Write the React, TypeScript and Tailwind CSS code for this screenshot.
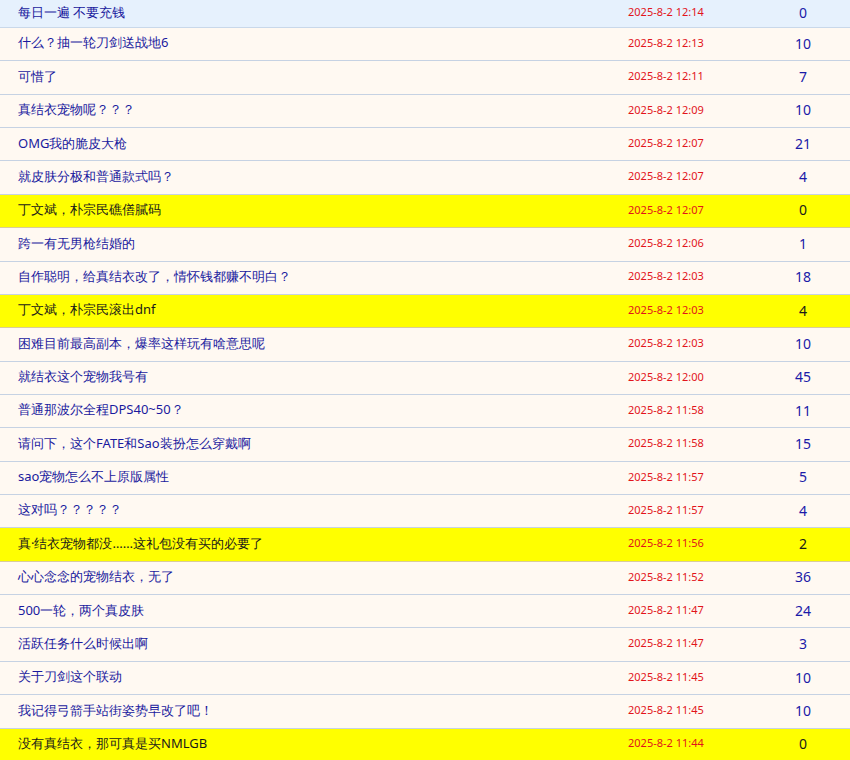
const rows: [string, string, string, number?][] = [
  ["什么？抽一轮刀剑送战地6", "2025-8-2 12:13", "10"],
  ["可惜了", "2025-8-2 12:11", "7"],
  ["真结衣宠物呢？？？", "2025-8-2 12:09", "10"],
  ["OMG我的脆皮大枪", "2025-8-2 12:07", "21"],
  ["就皮肤分极和普通款式吗？", "2025-8-2 12:07", "4"],
  ["丁文斌，朴宗民礁僐膩码", "2025-8-2 12:07", "0", 1],
  ["跨一有无男枪结婚的", "2025-8-2 12:06", "1"],
  ["自作聪明，给真结衣改了，情怀钱都赚不明白？", "2025-8-2 12:03", "18"],
  ["丁文斌，朴宗民滚出dnf", "2025-8-2 12:03", "4", 1],
  ["困难目前最高副本，爆率这样玩有啥意思呢", "2025-8-2 12:03", "10"],
  ["就结衣这个宠物我号有", "2025-8-2 12:00", "45"],
  ["普通那波尔全程DPS40~50？", "2025-8-2 11:58", "11"],
  ["请问下，这个FATE和Sao装扮怎么穿戴啊", "2025-8-2 11:58", "15"],
  ["sao宠物怎么不上原版属性", "2025-8-2 11:57", "5"],
  ["这对吗？？？？？", "2025-8-2 11:57", "4"],
  ["真·结衣宠物都没……这礼包没有买的必要了", "2025-8-2 11:56", "2", 1],
  ["心心念念的宠物结衣，无了", "2025-8-2 11:52", "36"],
  ["500一轮，两个真皮肤", "2025-8-2 11:47", "24"],
  ["活跃任务什么时候出啊", "2025-8-2 11:47", "3"],
  ["关于刀剑这个联动", "2025-8-2 11:45", "10"],
  ["我记得弓箭手站街姿势早改了吧！", "2025-8-2 11:45", "10"],
  ["没有真结衣，那可真是买NMLGB", "2025-8-2 11:44", "0", 1],
];

function Row({ t, d, c, y, first }: { t: string; d: string; c: string; y?: number; first?: boolean }) {
  const bg = first
    ? "bg-[#e6f1fd] border-[#c9d8ea] h-[28px] pb-[2px]"
    : y
    ? "bg-[#ffff00] border-[#d9cc9a] h-[33.36px] pb-[2px]"
    : "bg-[#fff9f2] border-[#c6d2e3] h-[33.36px] pb-[2px]";
  return (
    <div className={`flex items-center border-b box-border ${bg}`}>
      <div className={`pl-[18px] w-[628px] text-[13px] font-['Noto_Sans_CJK_SC',sans-serif] ${y ? "text-[#1a1a1a]" : "text-[#1a1a9e]"}`}>{t}</div>
      <div className="w-[130px] text-[11px] text-[#e2141b] font-['Liberation_Sans',Arial,sans-serif]">{d}</div>
      <div className={`w-[90px] text-center text-[14px] font-['Liberation_Sans',Arial,sans-serif] ${y ? "text-[#1a1a1a]" : "text-[#1a1aa8]"}`}>{c}</div>
    </div>
  );
}

export default function App() {
  return (
    <div className="w-[850px] h-[760px] overflow-hidden bg-[#fff9f2]">
      <Row t="每日一遍 不要充钱" d="2025-8-2 12:14" c="0" first />
      {rows.map((r, i) => (
        <Row key={i} t={r[0]} d={r[1]} c={r[2]} y={r[3]} />
      ))}
    </div>
  );
}
